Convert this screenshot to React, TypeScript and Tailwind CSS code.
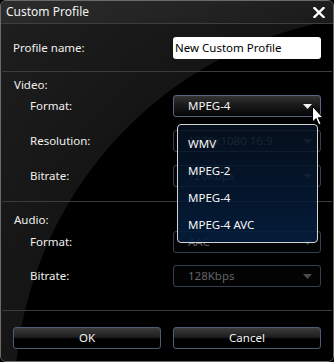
import React from "react";

const font = { fontFamily: '"Noto Sans", "Open Sans", Arial, sans-serif' };

function Arrow({ disabled }: { disabled?: boolean }) {
  return (
    <svg width="9" height="5" viewBox="0 0 9 5" className="absolute right-[8px] top-[8px]">
      <path d="M0 0 H9 L4.5 5 Z" fill={disabled ? "#4a4a4a" : "#f2f2f2"} />
    </svg>
  );
}

function Select({ value, disabled }: { value: string; disabled?: boolean }) {
  return (
    <div
      className={
        "relative w-[148px] h-[22px] rounded-[3px] border flex items-center pl-[14px] text-[11.5px] " +
        (disabled
          ? "border-[#344052] bg-[#030303] text-[#666666]"
          : "border-[#5a6680] bg-[linear-gradient(#343434,#1a1a1a_45%,#050505)] text-[#f4f4f4]")
      }
    >
      {value}
      <Arrow disabled={disabled} />
    </div>
  );
}

function Row({ label, children }: { label: string; children: React.ReactNode }) {
  return (
    <div className="flex items-center justify-between pl-[29px] pr-[12px] h-[22px]">
      <span className="text-[11.5px] text-[#f0f0f0]">{label}</span>
      {children}
    </div>
  );
}

function Sep() {
  return <div className="h-px bg-[#3c3c3c] mx-[1px]" />;
}

function Button({ children }: { children: React.ReactNode }) {
  return (
    <div className="w-[148px] h-[22px] rounded-[3px] border border-[#4f5d74] bg-[linear-gradient(#3c3c3c,#1e1e1e_45%,#000_55%,#000)] flex items-center justify-center text-[11.5px] text-[#f4f4f4]">
      {children}
    </div>
  );
}

export default function App() {
  return (
    <div style={font} className="w-[334px] h-[362px] bg-black">
      <div className="relative w-[334px] h-[362px] rounded-[6px] border border-[#6a6a6a] overflow-hidden flex flex-col bg-black">
        {/* title bar */}
        <div className="h-[22px] flex items-center justify-between pl-[5px] pr-[8px] bg-[linear-gradient(160deg,#2c2c2c,#222_60%,#1a1a1a)]">
          <span className="text-[12px] text-[#f2f2f2]">Custom Profile</span>
          <svg width="12" height="11" viewBox="0 0 12 11">
            <path d="M1.5 1 L10.5 10 M10.5 1 L1.5 10" stroke="#ffffff" strokeWidth="2.4" strokeLinecap="square" />
          </svg>
        </div>
        <div className="h-px bg-[#3e3e3e]" />
        {/* body */}
        <div className="flex-1 flex flex-col bg-[radial-gradient(circle_at_399px_376px,#000_385px,#151515_386px,#1f1f1f_560px)]">
          <div className="pt-[13px] pb-[12px] flex items-center justify-between pl-[12px] pr-[12px]">
            <span className="text-[11.5px] text-[#f0f0f0]">Profile name:</span>
            <div className="w-[148px] h-[22px] rounded-[3px] bg-white flex items-center pl-[2px] text-[11.5px] text-black">
              New Custom Profile
            </div>
          </div>
          <Sep />
          <div className="pt-[5px] pb-[14px] flex flex-col">
            <div className="h-[16px] leading-[16px] pl-[13px] text-[11.5px] text-[#f0f0f0]">Video:</div>
            <div className="mt-[2px] flex flex-col gap-[13px]">
              <Row label="Format:">
                <Select value="MPEG-4" />
              </Row>
              <Row label="Resolution:">
                <Select value="1920x1080 16:9" disabled />
              </Row>
              <Row label="Bitrate:">
                <Select value="720Kbps" disabled />
              </Row>
            </div>
          </div>
          <Sep />
          <div className="pt-[10px] pb-[23px] flex flex-col">
            <div className="h-[16px] leading-[16px] pl-[13px] text-[11.5px] text-[#f0f0f0]">Audio:</div>
            <div className="mt-[3px] flex flex-col gap-[12px]">
              <Row label="Format:">
                <Select value="AAC" disabled />
              </Row>
              <Row label="Bitrate:">
                <Select value="128Kbps" disabled />
              </Row>
            </div>
          </div>
          <Sep />
          <div className="pt-[16px] flex justify-between pl-[12px] pr-[12px]">
            <Button>OK</Button>
            <Button>Cancel</Button>
          </div>
        </div>

        {/* dropdown popup */}
        <div className="absolute left-[176px] top-[123px] w-[141px] h-[119px] rounded-[4px] border border-[#d4d4d4] bg-[linear-gradient(rgba(6,18,34,0.8),rgba(4,30,62,0.9))] flex flex-col pl-[10px] pt-[9px] text-[11.5px] text-[#f6f6f6]">
          <div className="h-[27px] leading-[19px]">WMV</div>
          <div className="h-[27px] leading-[19px]">MPEG-2</div>
          <div className="h-[27px] leading-[19px]">MPEG-4</div>
          <div className="h-[27px] leading-[19px]">MPEG-4 AVC</div>
        </div>

        {/* cursor */}
        <svg width="13" height="20" viewBox="0 0 13 20" className="absolute left-[311px] top-[105px]">
          <path d="M0.5 0.5 V16 L4 12.5 L6.8 18.8 L9 17.8 L6.3 11.7 H11 Z" fill="#fff" stroke="#000" strokeWidth="1" strokeLinejoin="round" />
        </svg>
      </div>
    </div>
  );
}
